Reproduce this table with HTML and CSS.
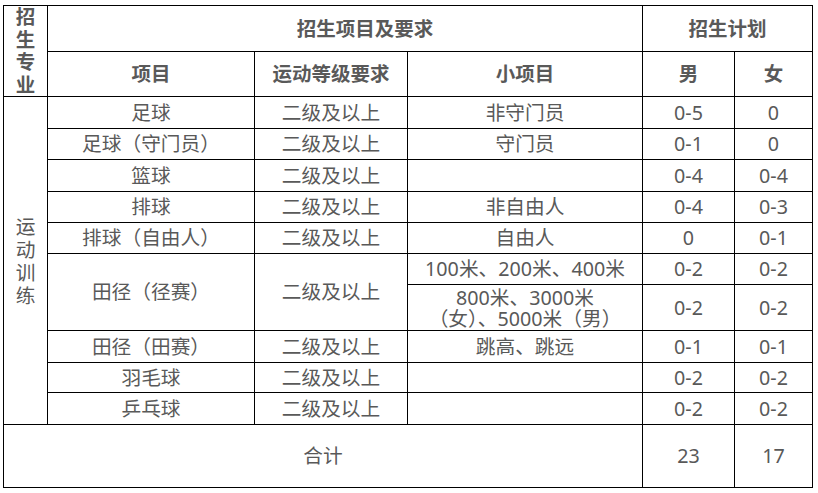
FILE: index.html
```html
<!DOCTYPE html>
<html lang="zh">
<head>
<meta charset="utf-8">
<title>招生计划</title>
<link rel="stylesheet" href="styles.css">
</head>
<body>
<div class="table">
  <div class="cell head major"><span class="stack">招生专业</span></div>
  <div class="cell head span3 shift">招生项目及要求</div>
  <div class="cell head span2">招生计划</div>

  <div class="cell head">项目</div>
  <div class="cell head">运动等级要求</div>
  <div class="cell head">小项目</div>
  <div class="cell head">男</div>
  <div class="cell head">女</div>

  <div class="cell sport"><span class="stack tall">运动训练</span></div>
  <div class="cell">足球</div>
  <div class="cell">二级及以上</div>
  <div class="cell">非守门员</div>
  <div class="cell">0-5</div>
  <div class="cell">0</div>

  <div class="cell">足球（守门员）</div>
  <div class="cell">二级及以上</div>
  <div class="cell">守门员</div>
  <div class="cell">0-1</div>
  <div class="cell">0</div>

  <div class="cell">篮球</div>
  <div class="cell">二级及以上</div>
  <div class="cell"></div>
  <div class="cell">0-4</div>
  <div class="cell">0-4</div>

  <div class="cell">排球</div>
  <div class="cell">二级及以上</div>
  <div class="cell">非自由人</div>
  <div class="cell">0-4</div>
  <div class="cell">0-3</div>

  <div class="cell">排球（自由人）</div>
  <div class="cell">二级及以上</div>
  <div class="cell">自由人</div>
  <div class="cell">0</div>
  <div class="cell">0-1</div>

  <div class="cell rows2">田径（径赛）</div>
  <div class="cell rows2">二级及以上</div>
  <div class="cell">100米、200米、400米</div>
  <div class="cell">0-2</div>
  <div class="cell">0-2</div>
  <div class="cell two">800米、3000米<br>（女）、5000米（男）</div>
  <div class="cell">0-2</div>
  <div class="cell">0-2</div>

  <div class="cell">田径（田赛）</div>
  <div class="cell">二级及以上</div>
  <div class="cell">跳高、跳远</div>
  <div class="cell">0-1</div>
  <div class="cell">0-1</div>

  <div class="cell">羽毛球</div>
  <div class="cell">二级及以上</div>
  <div class="cell"></div>
  <div class="cell">0-2</div>
  <div class="cell">0-2</div>

  <div class="cell">乒乓球</div>
  <div class="cell">二级及以上</div>
  <div class="cell"></div>
  <div class="cell">0-2</div>
  <div class="cell">0-2</div>

  <div class="cell span4">合计</div>
  <div class="cell">23</div>
  <div class="cell">17</div>
</div>
</body>
</html>
```

FILE: styles.css
```css
html, body {
  margin: 0;
  padding: 0;
  background: #ffffff;
}

body {
  padding: 5px 0 0 3px;
  font-family: "Noto Sans", "Noto Sans CJK SC", sans-serif;
  font-size: 19.7px;
  color: #595959;
}

.table {
  display: grid;
  width: 810px;
  box-sizing: border-box;
  padding: 1px;
  gap: 1px;
  background: #000000;
  grid-template-columns: 43px 206px 152px 234px 91px 77px;
  grid-template-rows: 45px 44px 31px 30px 31px 30px 30px 30px 45px 31px 29px 31px 62px;
}

.cell {
  background: #ffffff;
  display: flex;
  align-items: center;
  justify-content: center;
  text-align: center;
  line-height: 22px;
  white-space: nowrap;
}

.head {
  font-weight: bold;
  font-size: 19.5px;
}

.major {
  grid-row: span 2;
}

.sport {
  grid-row: span 10;
}

.span3 {
  grid-column: span 3;
}

.shift {
  padding-left: 40px;
}

.span2 {
  grid-column: span 2;
}

.span4 {
  grid-column: span 4;
}

.rows2 {
  grid-row: span 2;
}

.two {
  line-height: 21.5px;
  padding-top: 1px;
}

.stack {
  display: block;
  width: 1em;
  white-space: normal;
  word-break: break-all;
  line-height: 22.5px;
}

.stack.tall {
  line-height: 23px;
}
```
